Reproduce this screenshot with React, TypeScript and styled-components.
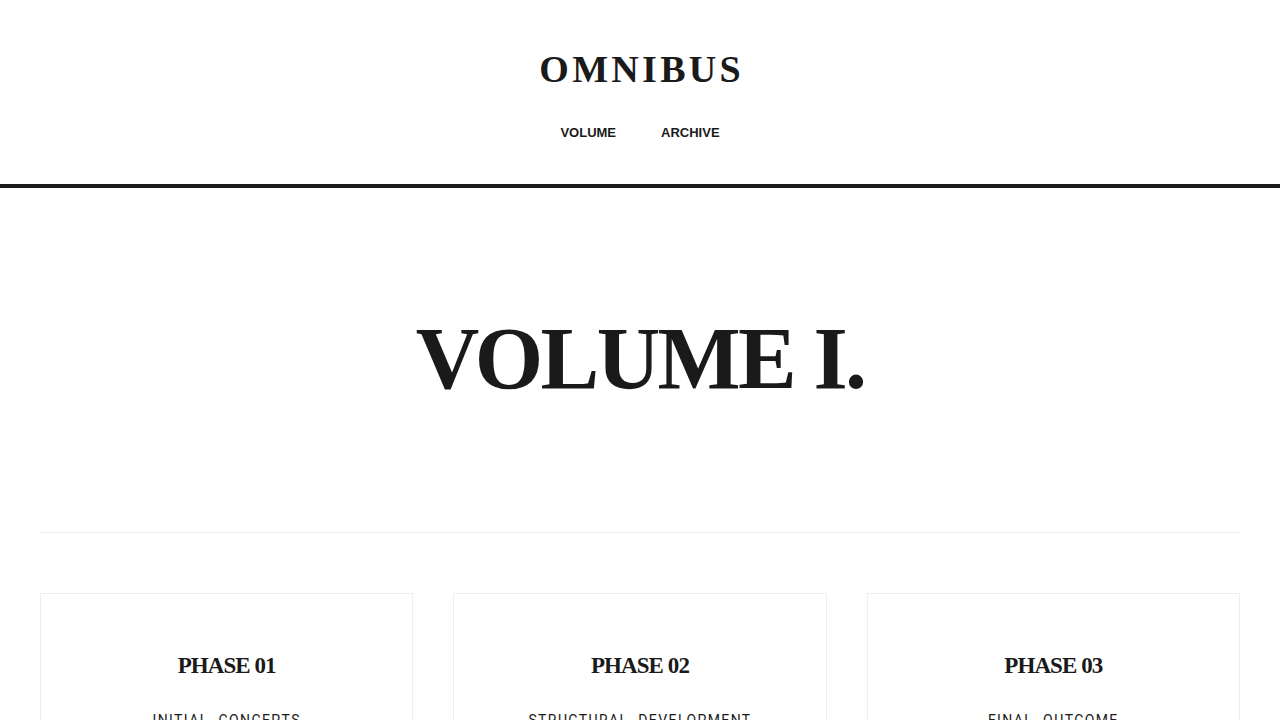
import React from 'react'
import styled, { createGlobalStyle } from 'styled-components'

const GlobalStyle = createGlobalStyle`
  html, body {
    margin: 0;
    padding: 0;
    background: #ffffff;
    color: #1a1a1a;
  }
  * {
    box-sizing: border-box;
  }
`

const Header = styled.header`
  padding: 45px 40px 0;
  height: 188px;
  border-bottom: 4px solid #1a1a1a;
  display: flex;
  flex-direction: column;
  align-items: center;
`

const Logo = styled.h1`
  margin: 0;
  font-family: 'Liberation Serif', serif;
  font-weight: 700;
  font-size: 38px;
  line-height: 48px;
  letter-spacing: 3.3px;
  margin-right: -3.3px;
`

const Nav = styled.nav`
  margin-top: 32px;
  display: flex;
  gap: 45px;
`

const NavLink = styled.a`
  font-family: 'Liberation Sans', Arial, sans-serif;
  font-weight: 700;
  font-size: 13px;
  line-height: 16px;
  color: #1a1a1a;
  text-decoration: none;
  text-transform: uppercase;
  cursor: pointer;
`

const Main = styled.main`
  padding: 0 40px;
`

const Hero = styled.section`
  padding: 127px 0 129px;
  border-bottom: 1px solid #eeeeee;
  text-align: center;
`

const HeroTitle = styled.h2`
  margin: 0;
  font-family: 'Liberation Serif', serif;
  font-weight: 700;
  font-size: 88px;
  line-height: 88px;
  letter-spacing: -0.03em;
`

const Grid = styled.section`
  margin-top: 60px;
  display: grid;
  grid-template-columns: repeat(3, 1fr);
  gap: 40px;
`

const Card = styled.article`
  border: 1px solid #eeeeee;
  padding: 57px 24px 48px;
  text-align: center;
  min-height: 240px;
`

const CardTitle = styled.h3`
  margin: 0;
  font-family: 'Liberation Serif', serif;
  font-weight: 700;
  font-size: 23px;
  line-height: 30px;
  letter-spacing: -0.04em;
`

const CardSubtitle = styled.p`
  margin: 29px 0 0;
  font-family: Roboto, 'Liberation Sans', sans-serif;
  font-size: 14px;
  line-height: 20px;
  letter-spacing: 1.4px;
  word-spacing: 5px;
  text-transform: uppercase;
  color: #1a1a1a;
`

const phases = [
  { title: 'Phase 01', subtitle: 'Initial Concepts' },
  { title: 'Phase 02', subtitle: 'Structural Development' },
  { title: 'Phase 03', subtitle: 'Final Outcome' },
]

export default function App() {
  return (
    <>
      <GlobalStyle />
      <Header>
        <Logo>OMNIBUS</Logo>
        <Nav>
          <NavLink>Volume</NavLink>
          <NavLink>Archive</NavLink>
        </Nav>
      </Header>
      <Main>
        <Hero>
          <HeroTitle>VOLUME I.</HeroTitle>
        </Hero>
        <Grid>
          {phases.map(p => (
            <Card key={p.title}>
              <CardTitle>{p.title.toUpperCase()}</CardTitle>
              <CardSubtitle>{p.subtitle}</CardSubtitle>
            </Card>
          ))}
        </Grid>
      </Main>
    </>
  )
}
